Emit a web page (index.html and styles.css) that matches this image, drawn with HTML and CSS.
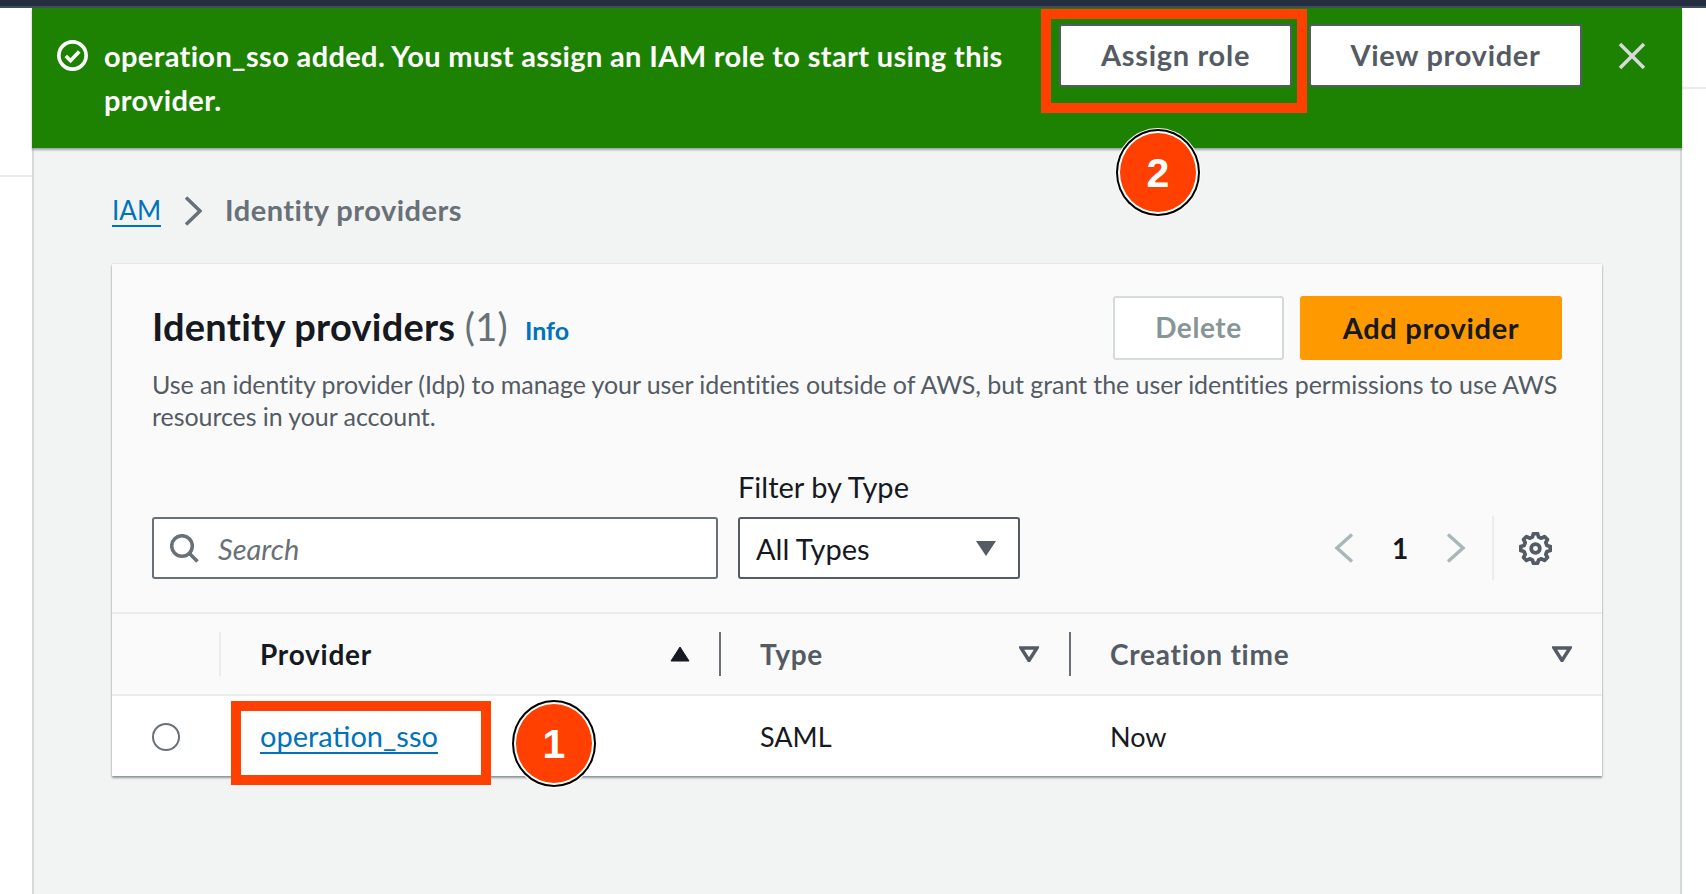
FILE: index.html
```html
<!DOCTYPE html>
<html lang="en">
<head>
<meta charset="utf-8">
<title>Identity providers</title>
<link rel="stylesheet" href="styles.css">
</head>
<body>
<div class="topbar"></div>
<div class="shell">
  <div class="gutter gutter-left"><div class="gutter-block"></div></div>
  <main class="main">
    <section class="flash">
      <svg class="flash-icon" viewBox="0 0 30 30"><circle cx="15" cy="15" r="13.2"/><path d="M8.500 15.500l4.600 4.600 8.400-9"/></svg>
      <p class="flash-text">operation_sso added. You must assign an IAM role to start using this provider.</p>
      <div class="flash-actions">
        <button class="btn-flash btn-assign">Assign role</button>
        <button class="btn-flash btn-view">View provider</button>
      </div>
      <svg class="flash-close" viewBox="0 0 28 28"><path d="M2 2l24 24M26 2L2 26"/></svg>
    </section>
    <div class="content">
      <nav class="crumbs">
        <a class="crumb-link">IAM</a>
        <svg class="crumb-sep" viewBox="0 0 18 30"><path d="M2 1.500L16 15 2 28.500"/></svg>
        <span class="crumb-current">Identity providers</span>
      </nav>
      <section class="card">
        <header class="card-head">
          <div class="title-row">
            <h1 class="title">Identity providers <span class="count">(1)</span></h1>
            <a class="info">Info</a>
            <div class="head-actions">
              <button class="btn btn-delete">Delete</button>
              <button class="btn btn-add">Add provider</button>
            </div>
          </div>
          <p class="desc">Use an identity provider (Idp) to manage your user identities outside of AWS, but grant the user identities permissions to use AWS resources in your account.</p>
          <div class="filters">
            <div class="search">
              <svg class="search-icon" viewBox="0 0 29 29"><circle cx="12" cy="12" r="10.300"/><path d="M19.500 19.500l8 8"/></svg>
              <span class="search-text">Search</span>
            </div>
            <div class="filter">
              <label class="filter-label">Filter by Type</label>
              <div class="select"><span>All Types</span><svg class="select-caret" viewBox="0 0 22 16"><path d="M1 1h20L11 16z"/></svg></div>
            </div>
            <div class="pager">
              <svg class="pager-chev" viewBox="0 0 20 30"><path d="M18 1.500L3 15l15 13.500"/></svg>
              <span class="pager-num">1</span>
              <svg class="pager-chev" viewBox="0 0 20 30"><path d="M2 1.500L17 15 2 28.500"/></svg>
              <span class="pager-div"></span>
              <svg class="gear" viewBox="0 0 32 32"><path d="M13.020 4.890L13.980 1.640H18.020L18.980 4.890L21.750 6.040L24.730 4.420L27.580 7.270L25.960 10.250L27.110 13.020L30.360 13.980V18.020L27.110 18.980L25.960 21.750L27.580 24.730L24.730 27.580L21.750 25.960L18.980 27.110L18.020 30.360H13.980L13.020 27.110L10.250 25.960L7.270 27.580L4.420 24.730L6.040 21.750L4.890 18.980L1.640 18.020V13.980L4.890 13.020L6.040 10.250L4.420 7.270L7.270 4.420L10.250 6.040Z"/><circle cx="16" cy="16" r="4.200"/></svg>
            </div>
          </div>
        </header>
        <div class="table">
          <div class="th th-radio"></div>
          <div class="th th-first"><span class="th-active">Provider</span><svg class="sort" viewBox="0 0 20 16"><path class="sort-solid" d="M10 1l9 14H1z"/></svg></div>
          <div class="th th-next"><span>Type</span><svg class="sort" viewBox="0 0 20 16"><path class="sort-open" d="M2 2h16l-8 12.500z"/></svg></div>
          <div class="th th-next"><span>Creation time</span><svg class="sort" viewBox="0 0 20 16"><path class="sort-open" d="M2 2h16l-8 12.500z"/></svg></div>
          <div class="td td-radio"><span class="radio"></span></div>
          <div class="td td-first"><a class="cell-link">operation_sso</a></div>
          <div class="td">SAML</div>
          <div class="td">Now</div>
        </div>
      </section>
    </div>
  </main>
  <div class="gutter gutter-right"><div class="gutter-block"></div></div>
</div>
<div class="mark-box mark-box-role"></div>
<div class="mark-box mark-box-link"></div>
<div class="badge badge-role">2</div>
<div class="badge badge-link">1</div>
</body>
</html>
```
FILE: styles.css
```css
* { box-sizing: border-box; }
html, body { height: 100%; }
body {
  margin: 0;
  height: 894px;
  overflow: hidden;
  background: #fff;
  font-family: "Lato", "Liberation Sans", sans-serif;
  font-size: 27px;
  line-height: 32px;
  color: #16191f;
  position: relative;
}
p, h1 { margin: 0; }
button { font-family: inherit; }

.topbar { height: 8px; background: #232f3e; border-bottom: 2px solid #414d5c; }
.shell { display: flex; height: 886px; }
.gutter { flex: none; background: #fff; }
.gutter-left { width: 32px; }
.gutter-right { width: 24px; }
.gutter-left .gutter-block { height: 169px; border-bottom: 2px solid #eaeded; }
.gutter-right .gutter-block { height: 81px; border-bottom: 2px solid #eaeded; }

.main {
  flex: 1;
  min-width: 0;
  background: #f2f3f3;
  border-left: 2px solid #d5dbdb;
  border-right: 2px solid #d5dbdb;
}

.flash {
  height: 140px;
  margin: 0 -2px;
  background: #1d8102;
  box-shadow: 0 2px 2px rgba(0, 28, 36, .35);
  display: flex;
  align-items: flex-start;
  padding: 16px 36px 0 25px;
  color: #fff;
  position: relative;
}
.flash-icon { flex: none; width: 31px; height: 31px; fill: none; stroke: #fff; stroke-width: 3.5; margin: 16px 16px 0 0; }
.flash-text { width: 955px; flex: none; font-weight: 700; font-size: 29px; letter-spacing: .35px; line-height: 44px; margin-top: 10px; }
.flash-actions { display: flex; gap: 17px; }
.btn-flash {
  height: 63px;
  border: 2px solid #545b64;
  border-radius: 3px;
  background: #fff;
  color: #545b64;
  font-weight: 700;
  font-size: 29px;
  letter-spacing: .7px;
  padding: 0 0 2px;
}
.btn-assign { width: 233px; }
.btn-view { width: 273px; }
.flash-close { flex: none; width: 28px; height: 28px; margin: 18px 0 0 36px; fill: none; stroke: #d5dbdb; stroke-width: 3.5; }

.content { padding: 0 78px; }
.crumbs { display: flex; align-items: center; height: 32px; margin-top: 47px; }
.crumb-link { color: #0073bb; border-bottom: 2px solid #0073bb; font-size: 26px; line-height: 30px; height: 32px; }
.crumb-sep { width: 18px; height: 30px; margin: 0 23px; fill: none; stroke: #687078; stroke-width: 3.5; }
.crumb-current { color: #687078; font-weight: 700; font-size: 29px; letter-spacing: .5px; padding-bottom: 2px; }

.card {
  margin-top: 37px;
  background: #fafafa;
  box-shadow: 0 2px 2px rgba(0, 28, 36, .4), 0 0 2px rgba(0, 28, 36, .15);
}
.card-head { padding: 32px 40px 34px; border-bottom: 2px solid #eaeded; height: 350px; }
.title-row { display: flex; align-items: center; height: 64px; }
.title { font-size: 38px; letter-spacing: .25px; line-height: 44px; font-weight: 700; margin-bottom: 4px; }
.count { color: #687078; font-weight: 400; }
.info { color: #0073bb; font-weight: 700; font-size: 25px; margin: 4px 0 0 17px; }
.head-actions { margin-left: auto; display: flex; gap: 16px; }
.btn { height: 64px; border-radius: 3px; font-weight: 700; font-size: 29px; letter-spacing: .7px; padding: 0 0 2px; }
.btn-delete { width: 171px; background: #fff; border: 2px solid #d5dbdb; color: #879596; font-size: 28px; letter-spacing: .6px; }
.btn-add { width: 262px; background: #f90; border: 2px solid #f90; color: #16191f; }
.desc { margin-top: 8px; color: #545b64; font-size: 25px; letter-spacing: -.07px; }

.filters { display: flex; align-items: flex-end; margin-top: 39px; }
.search {
  width: 566px;
  height: 62px;
  background: #fff;
  border: 2px solid #687078;
  border-radius: 3px;
  display: flex;
  align-items: center;
  padding-left: 16px;
}
.search-icon { width: 29px; height: 29px; fill: none; stroke: #687078; stroke-width: 3.5; margin-right: 19px; }
.search-text { color: #687078; font-style: italic; font-size: 29px; padding-top: 2px; }
.filter { margin-left: 20px; }
.filter-label { display: block; font-size: 29px; line-height: 32px; margin-bottom: 14px; }
.select {
  width: 282px;
  height: 62px;
  background: #fff;
  border: 2px solid #545b64;
  border-radius: 3px;
  display: flex;
  align-items: center;
  justify-content: space-between;
  padding: 0 21px 0 16px;
  font-size: 29px;
}
.select span { padding-top: 2px; }
.select-caret { width: 22px; height: 16px; fill: #545b64; }
.pager { margin-left: auto; display: flex; align-items: center; height: 64px; margin-bottom: -1px; }
.pager-chev { width: 20px; height: 30px; fill: none; stroke: #aab7b8; stroke-width: 3.5; }
.pager-num { width: 92px; text-align: center; font-weight: 700; font-size: 28px; }
.pager-div { width: 2px; height: 64px; background: #eaeded; margin: 0 25px 0 26px; }
.gear { width: 33px; height: 33px; fill: none; stroke: #545b64; stroke-width: 3.6; stroke-linejoin: round; margin-right: 10px; }

.table { display: grid; grid-template-columns: 107px 500px 350px 533px; }
.th {
  height: 82px;
  background: #fafafa;
  border-bottom: 2px solid #eaeded;
  display: flex;
  align-items: center;
  justify-content: space-between;
  font-weight: 700;
  color: #545b64;
  font-size: 28px;
  letter-spacing: .75px;
  position: relative;
}
.th::before { content: ""; position: absolute; left: 0; top: 18px; height: 44px; width: 2px; background: #687078; }
.th-radio::before { display: none; }
.th-first::before { background: #eaeded; }
.th-first { padding: 0 29px 0 41px; }
.th-next { padding: 0 30px 0 41px; }
.th-active { color: #16191f; }
.sort { width: 20px; height: 16px; }
.sort-solid { fill: #16191f; stroke: #16191f; stroke-width: 1; stroke-linejoin: round; }
.sort-open { fill: none; stroke: #545b64; stroke-width: 3.5; }
.td { height: 80px; background: #fff; display: flex; align-items: center; padding-left: 41px; padding-top: 2px; }
.td-radio { padding-left: 40px; }
.radio { width: 28px; height: 28px; border-radius: 50%; border: 2px solid #687078; background: #fff; }
.cell-link { color: #0073bb; border-bottom: 2px solid #0073bb; font-size: 29px; line-height: 32px; }

.mark-box { position: absolute; border: 10px solid #ff4000; }
.mark-box-role { left: 1041px; top: 9px; width: 266px; height: 104px; }
.mark-box-link { left: 231px; top: 701px; width: 260px; height: 84px; }
.badge {
  position: absolute;
  width: 80px;
  height: 83px;
  border-radius: 50%;
  background: #ff4000;
  border: 2px solid #fff;
  box-shadow: 0 0 0 2px #000, 0 0 0 3px #fff;
  color: #fff;
  font-family: "Liberation Sans", sans-serif;
  font-weight: 700;
  font-size: 41px;
  line-height: 81px;
  text-align: center;
}
.badge-role { left: 1118px; top: 131px; }
.badge-link { left: 514px; top: 702px; }
```
